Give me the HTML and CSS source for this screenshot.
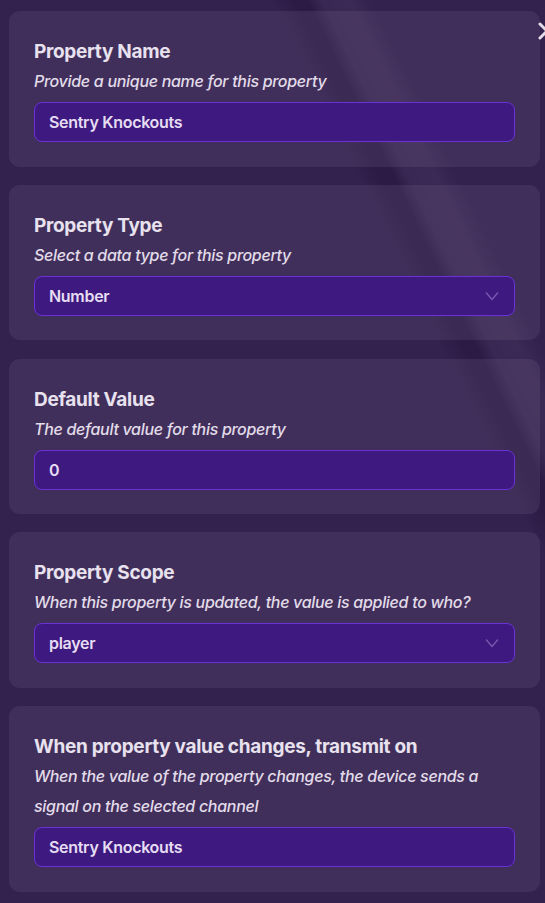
FILE: index.html
```html
<!DOCTYPE html>
<html lang="en">
<head>
<meta charset="utf-8">
<title>Property</title>
<link rel="stylesheet" href="styles.css">
</head>
<body>
<div class="panel">
  <section class="card">
    <h2 class="title">Property Name</h2>
    <p class="hint">Provide a unique name for this property</p>
    <div class="field">Sentry Knockouts</div>
  </section>
  <section class="card">
    <h2 class="title">Property Type</h2>
    <p class="hint">Select a data type for this property</p>
    <div class="field select">Number
      <svg class="chev" width="14" height="10" viewBox="0 0 14 10"><path d="M1 1.5 L7 8.5 L13 1.5" fill="none" stroke="currentColor" stroke-width="1.2"/></svg>
    </div>
  </section>
  <section class="card">
    <h2 class="title">Default Value</h2>
    <p class="hint">The default value for this property</p>
    <div class="field">0</div>
  </section>
  <section class="card">
    <h2 class="title">Property Scope</h2>
    <p class="hint">When this property is updated, the value is applied to who?</p>
    <div class="field select">player
      <svg class="chev" width="14" height="10" viewBox="0 0 14 10"><path d="M1 1.5 L7 8.5 L13 1.5" fill="none" stroke="currentColor" stroke-width="1.2"/></svg>
    </div>
  </section>
  <section class="card">
    <h2 class="title">When property value changes, transmit on</h2>
    <p class="hint">When the value of the property changes, the device sends a signal on the selected channel</p>
    <div class="field">Sentry Knockouts</div>
  </section>
  <button class="close" aria-label="Close">
    <svg width="18" height="18" viewBox="0 0 18 18"><path d="M2 2 L16 16 M16 2 L2 16" stroke="currentColor" stroke-width="3" stroke-linecap="round"/></svg>
  </button>
</div>
</body>
</html>
```
FILE: styles.css
```css
html {
  height: 100%;
  background-color: #33214e;
  background-image: linear-gradient(64deg,
    rgba(0,0,0,0) 0px,
    rgba(0,0,0,0) 640px,
    rgba(20,10,40,0.25) 660px,
    rgba(20,10,40,0.25) 672px,
    rgba(255,255,255,0.03) 685px,
    rgba(255,255,255,0.04) 710px,
    rgba(0,0,0,0) 730px);
}
body {
  margin: 0;
  height: 100%;
  overflow: hidden;
  font-family: Inter, "Noto Sans", sans-serif;
  color: #e7e1ee;
}
.panel {
  position: relative;
  display: flex;
  flex-direction: column;
  gap: 18.25px;
  padding: 11px 0 0 9px;
}
.card {
  width: 531px;
  box-sizing: border-box;
  padding: 27px 25px 24.5px 25px;
  background: rgba(120, 100, 140, 0.22);
  border-radius: 11px;
}
.title {
  margin: 0;
  font-size: 19px;
  line-height: 28px;
  font-weight: 700;
  letter-spacing: -0.3px;
  color: #e8e2ef;
}
.hint {
  margin: 0 0 6px;
  font-size: 16px;
  line-height: 30px;
  font-style: italic;
  font-weight: 500;
  letter-spacing: -0.3px;
  color: #e2dce9;
}
.field {
  display: flex;
  align-items: center;
  justify-content: space-between;
  height: 40px;
  box-sizing: border-box;
  padding: 0 14px;
  border: 1px solid #6a31d6;
  border-radius: 8px;
  background: #3e1a80;
  font-size: 16px;
  font-weight: 600;
  letter-spacing: -0.3px;
  color: #e6ddf3;
}
.chev {
  color: #7b5cb2;
  margin-right: 1px;
}
.close {
  position: absolute;
  top: 22px;
  left: 538px;
  padding: 0;
  border: 0;
  background: none;
  color: #e3dde9;
}
```
